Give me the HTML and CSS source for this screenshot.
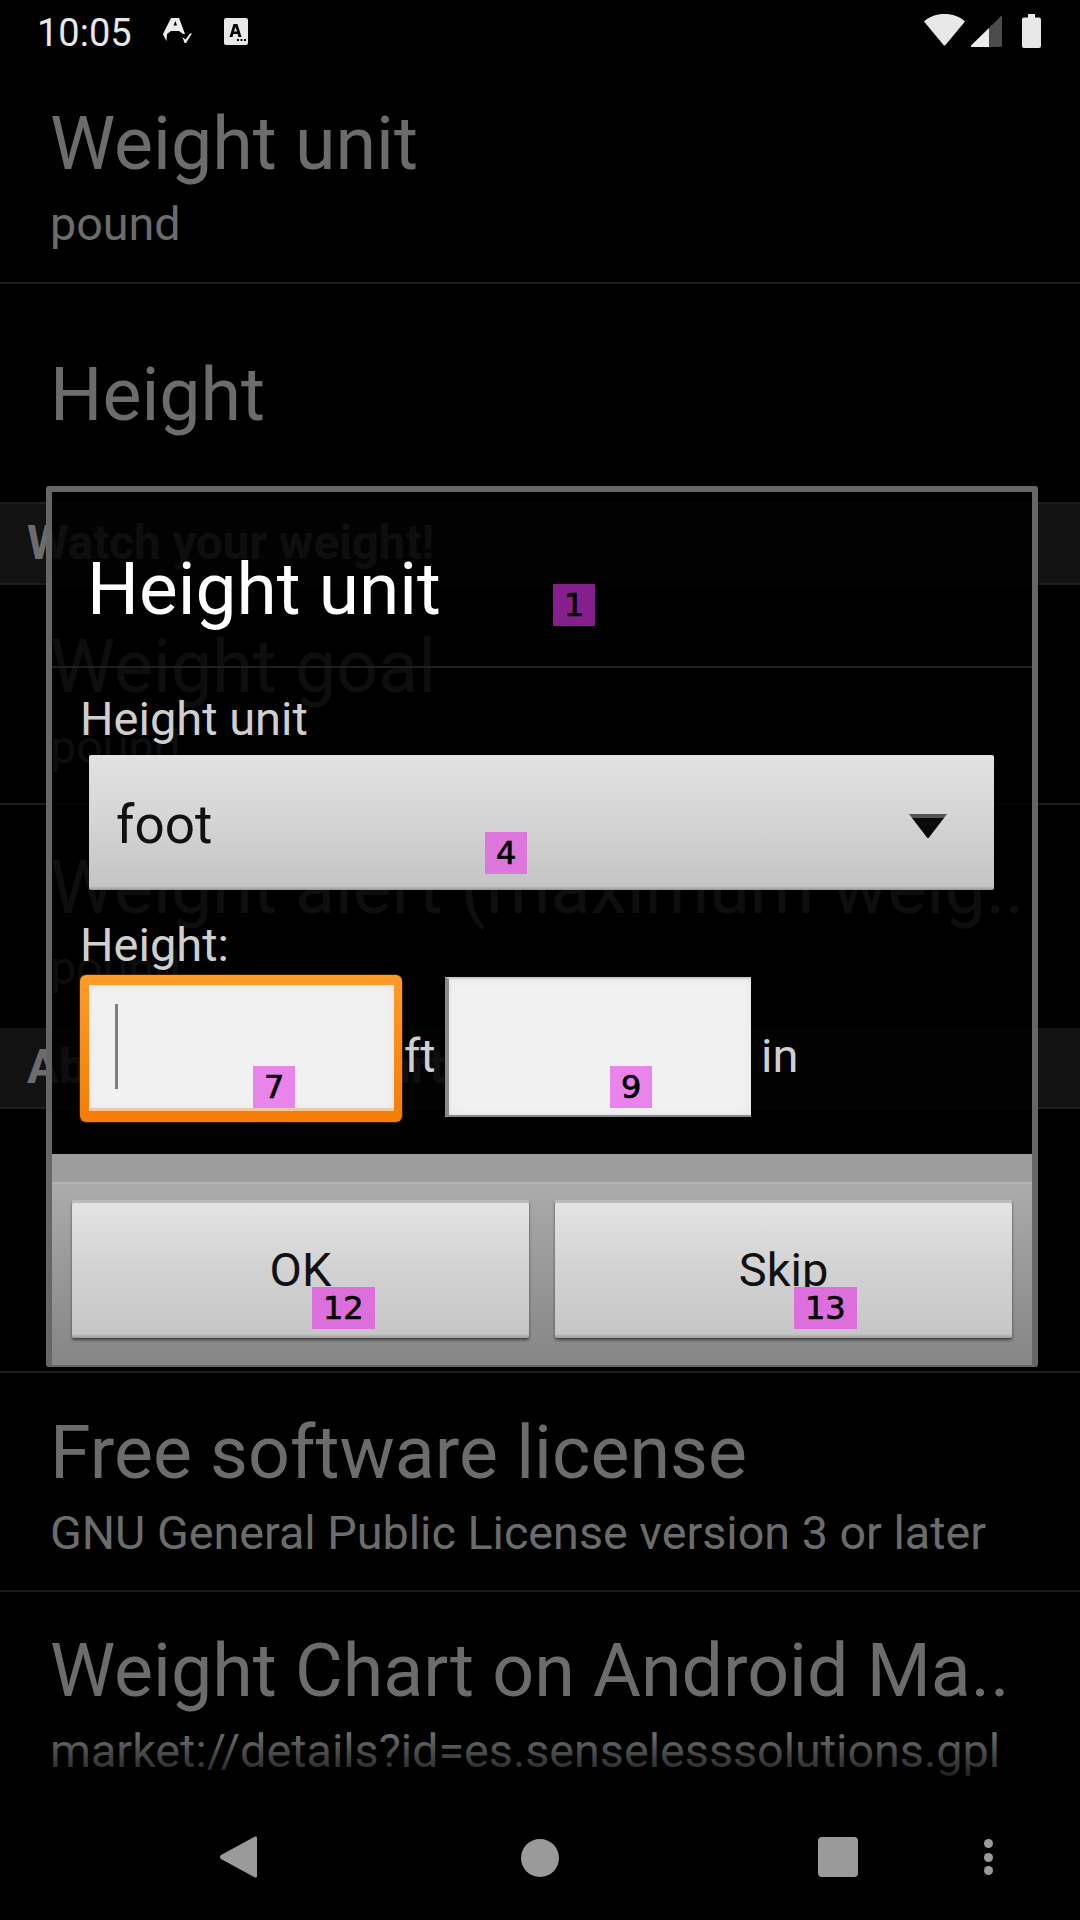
FILE: index.html
```html
<!DOCTYPE html>
<html lang="en">
<head>
<meta charset="utf-8">
<title>Height unit</title>
<link rel="stylesheet" href="styles.css">
</head>
<body>
<div class="screen">
  <header class="status">
    <span class="clock">10:05</span>
    <svg class="ic-a" viewBox="0 0 30 26"><path fill="#eee" fill-rule="evenodd" d="M8 1h8l6 16h-2l-4-3H8l-4 3-.5 7-3-5.500L0 17zM10.500 8.500H14L12.300 4z"/><path fill="#eee" d="M19.500 20l3 2.500 4.500-6h2l-6 9.500h-1.500z"/></svg>
    <svg class="ic-card" viewBox="0 0 24 27"><path fill="#e8e8e8" fill-rule="evenodd" d="M2 0h20a2 2 0 0 1 2 2v23a2 2 0 0 1-2 2H2a2 2 0 0 1-2-2V2a2 2 0 0 1 2-2zM9.500 6L5.500 19h3l.8-3h4.400l.8 3h3L13.500 6zM10 13.500l1.500-4.500 1.500 4.500zM13 21v2h2v-2zM16.500 21v2h2v-2zM20 21v2h2v-2z"/></svg>
    <span class="status-space"></span>
    <svg class="ic-wifi" viewBox="0 0 41 32"><path fill="#e8e8e8" d="M0 7.500C5 2.500 12.500 0 20.500 0S36 2.500 41 7.500L21.500 31a1.300 1.300 0 0 1-2 0z"/></svg>
    <svg class="ic-signal" viewBox="0 0 31 31"><path fill="#4c4c4c" d="M30 0a1 1 0 0 1 1 1v28a2 2 0 0 1-2 2H18V12z"/><path fill="#ececec" d="M18 12v19H1a1 1 0 0 1-1-1.500z"/></svg>
    <svg class="ic-batt" viewBox="0 0 19 34"><path fill="#e8e8e8" d="M6 0h7v3.500h4a2 2 0 0 1 2 2V32a2 2 0 0 1-2 2H2a2 2 0 0 1-2-2V5.500a2 2 0 0 1 2-2h4z"/></svg>
  </header>

  <main class="list">
    <section class="row row-first"><div class="row-title">Weight unit</div><div class="row-sub">pound</div></section>
    <section class="row row-height"><div class="row-title">Height</div></section>
    <h2 class="section">Watch your weight!</h2>
    <section class="row row-goal"><div class="row-title">Weight goal</div><div class="row-sub">pound</div></section>
    <section class="row row-alert"><div class="row-title">Weight alert (maximum weig..</div><div class="row-sub">pound</div></section>
    <h2 class="section">About Weight Chart</h2>
    <section class="row row-hidden"></section>
    <section class="row row-free"><div class="row-title">Free software license</div><div class="row-sub">GNU General Public License version 3 or later</div></section>
    <section class="row row-last"><div class="row-title">Weight Chart on Android Ma..</div><div class="row-sub">market://details?id=es.senselesssolutions.gpl<br>.weightchart</div></section>
  </main>

  <nav class="nav">
    <svg class="nav-back" viewBox="0 0 37 42"><path fill="#9a9a9a" d="M35 .5a1.500 1.500 0 0 1 2 1.500v38a1.500 1.500 0 0 1-2 1.500L1 23a2.500 2.500 0 0 1 0-4z"/></svg>
    <span class="nav-home"></span>
    <span class="nav-recent"></span>
    <span class="nav-more"><i></i><i></i><i></i></span>
  </nav>

  <div class="dialog">
    <div class="dialog-head">
      <span class="dialog-title">Height unit</span>
      <span class="tag tag-1">1</span>
    </div>
    <div class="dialog-body">
      <div class="label label-unit">Height unit</div>
      <div class="spinner">
        <span class="spinner-text">foot</span>
        <svg class="spinner-arrow" viewBox="0 0 40 24"><path fill="#555" d="M1 0h38l-3 4H4z"/><path fill="#0a0a0a" d="M4 4h32L21 23.500a1.300 1.300 0 0 1-2 0z"/></svg>
        <span class="tag tag-4">4</span>
      </div>
      <div class="label label-height">Height:</div>
      <div class="fields">
        <div class="field field-focus">
          <span class="caret"></span>
          <span class="tag tag-7">7</span>
        </div>
        <span class="unit unit-ft">ft</span>
        <div class="field field-plain">
          <span class="tag tag-9">9</span>
        </div>
        <span class="unit unit-in">in</span>
      </div>
    </div>
    <div class="dialog-foot">
      <div class="foot-band"></div>
      <div class="foot-panel">
        <div class="btn">OK<span class="tag tag-12">12</span></div>
        <div class="btn">Skip<span class="tag tag-13">13</span></div>
      </div>
    </div>
  </div>
</div>
</body>
</html>
```

FILE: styles.css
```css
* { box-sizing: border-box; }
html, body { margin: 0; padding: 0; background: #000; }
.screen {
  position: relative;
  width: 1080px;
  height: 1920px;
  overflow: hidden;
  display: flex;
  flex-direction: column;
  background: #000;
  font-family: Roboto, "Liberation Sans", sans-serif;
}

/* status bar */
.status {
  height: 72px;
  flex: none;
  display: flex;
  align-items: flex-start;
  padding-left: 37px;
  color: #e8e8e8;
}
.clock { font-size: 38px; line-height: 38px; margin-top: 14px; width: 126px; }
.ic-a { width: 30px; height: 26px; margin-top: 17px; }
.ic-card { width: 24px; height: 27px; margin-top: 18px; margin-left: 31px; }
.status-space { flex: 1; }
.ic-wifi { width: 41px; height: 32px; margin-top: 14px; }
.ic-signal { width: 31px; height: 31px; margin-top: 16px; margin-left: 6px; }
.ic-batt { width: 19px; height: 34px; margin-top: 14px; margin-left: 20px; margin-right: 39px; }

/* list behind the dialog */
.list {
  position: relative;
  flex: 1;
  min-height: 0;
  overflow: hidden;
  color: #6c6c6c;
}
.list::after {
  content: "";
  position: absolute;
  left: 0;
  right: 0;
  bottom: 0;
  height: 60px;
  background: linear-gradient(rgba(0,0,0,0), #000);
}
.row {
  padding: 0 50px;
  border-bottom: 2px solid #1c1c1c;
  display: flex;
  flex-direction: column;
  justify-content: center;
  white-space: nowrap;
}
.row-first { height: 212px; }
.row-height { height: 220px; padding-top: 4px; }
.row-goal { height: 220px; padding-top: 12px; }
.row-alert { height: 223px; padding-top: 8px; border-bottom: 0; }
.row-hidden { height: 264px; }
.row-free { height: 219px; padding-top: 8px; }
.row-last { height: 260px; justify-content: flex-start; padding-top: 35px; border-bottom: 0; }
.row-title { font-size: 73.500px; line-height: 88px; }
.row-sub { font-size: 46.700px; line-height: 60px; margin-top: 6px; }
.section {
  margin: 0;
  height: 81px;
  padding-left: 27px;
  background: #121212;
  border-bottom: 2px solid #1c1c1c;
  color: #6c6c6c;
  font-size: 47.500px;
  font-weight: 700;
  line-height: 79px;
  white-space: nowrap;
}

/* navigation bar */
.nav {
  height: 126px;
  flex: none;
  display: flex;
  align-items: flex-start;
  padding-left: 220px;
  background: #000;
}
.nav-back { width: 37px; height: 42px; margin-top: 42px; }
.nav-home { width: 38px; height: 38px; margin-top: 45px; margin-left: 264px; border-radius: 50%; background: #9a9a9a; }
.nav-recent { width: 40px; height: 40px; margin-top: 43px; margin-left: 259px; border-radius: 4px; background: #9a9a9a; }
.nav-more { display: flex; flex-direction: column; gap: 4.500px; margin-top: 45px; margin-left: 126px; }
.nav-more i { display: block; width: 9px; height: 9px; border-radius: 50%; background: #9a9a9a; }

/* dialog */
.dialog {
  position: absolute;
  left: 46px;
  top: 486px;
  width: 992px;
  height: 881px;
  display: flex;
  flex-direction: column;
  padding: 6px 6px 2px;
  background: linear-gradient(rgba(0,0,0,.87), rgba(0,0,0,.87)) content-box;
  border-radius: 3px;
  box-shadow: inset 0 0 0 6px #666;
}
.dialog-head {
  position: relative;
  height: 176px;
  flex: none;
  border-bottom: 2px solid #1f1f1f;
  padding: 57px 0 0 35px;
}
.dialog-title { display: block; font-size: 73px; line-height: 80px; color: #fff; }
.dialog-body {
  flex: 1;
  padding: 0 28px;
}
.label { color: #cfcfcf; font-size: 47px; line-height: 50px; }
.label-unit { padding-top: 26px; height: 87px; }
.label-height { padding-top: 30px; height: 85px; }
.spinner {
  position: relative;
  height: 135px;
  margin: 0 10px 0 9px;
  display: flex;
  align-items: center;
  justify-content: space-between;
  padding: 0 46px 0 27px;
  color: #111;
  font-size: 53px;
  border-radius: 2px;
  background: linear-gradient(#e2e2e2, #d4d4d4 50%, #c4c4c4 97%, #999);
}
.spinner-text { padding-top: 4px; }
.spinner-arrow { width: 40px; height: 24px; margin-top: 6px; }
.fields { display: flex; align-items: flex-start; height: 147px; }
.field { position: relative; flex: none; }
.field-focus {
  width: 322px;
  height: 147px;
  border: solid transparent;
  border-width: 10px 8px 11px 9px;
  border-radius: 6px;
  background:
    linear-gradient(#f1f1f1, #f1f1f1) padding-box,
    linear-gradient(#fd9c27, #f57c06) border-box;
  box-shadow: inset 0 -3px 0 #ecc9a0, inset 0 0 8px #e0e0e0, 0 0 0 1px rgba(120,60,0,.45);
}
.field-plain {
  width: 306px;
  height: 140px;
  margin-top: 2px;
  background: #f1f1f1;
  border-top: 2px solid #ccc;
  border-left: 4px solid #8a8a8a;
  border-bottom: 2px solid #888;
  box-shadow: inset 0 0 8px #e2e2e2;
}
.caret { position: absolute; left: 26px; top: 19px; width: 3px; height: 85px; background: #808080; }
.unit { flex: none; color: #cfcfcf; font-size: 47px; line-height: 50px; margin-top: 56px; }
.unit-ft { width: 43px; padding-left: 2px; }
.unit-in { padding-left: 10px; }
.dialog-foot { flex: none; height: 211px; display: flex; flex-direction: column; }
.foot-band { height: 28px; flex: none; background: #9c9c9c; }
.foot-panel {
  flex: 1;
  display: flex;
  gap: 26px;
  padding: 16px 20px 27px;
  border-top: 2px solid #b4b4b4;
  background: linear-gradient(#ababab, #858585);
}
.btn {
  position: relative;
  flex: 1;
  display: flex;
  align-items: center;
  justify-content: center;
  color: #111;
  font-size: 47px;
  border-radius: 2px;
  background: linear-gradient(#e4e4e4, #d2d2d2 50%, #c6c6c6 97%, #999);
  box-shadow: inset 0 3px 0 #bbb, 0 2px 3px rgba(0,0,0,.55);
}

/* numbered overlays */
.tag {
  position: absolute;
  height: 42px;
  padding: 0 11px;
  font-family: "DejaVu Sans", sans-serif;
  font-size: 32px;
  line-height: 42px;
  color: #000;
  -webkit-text-stroke: .7px #000;
  background: #dd77dd;
}
.tag-1 { left: 501px; top: 92px; background: #851f8b; }
.tag-4 { left: 396px; top: 77px; background: #dd77dd; }
.tag-7 { left: 164px; top: 81px; background: #e884ec; }
.tag-9 { left: 161px; top: 87px; background: #e884ec; }
.tag-12 { left: 240px; top: 87px; background: #dd6fdc; }
.tag-13 { left: 239px; top: 87px; background: #dd6fdc; }
```
